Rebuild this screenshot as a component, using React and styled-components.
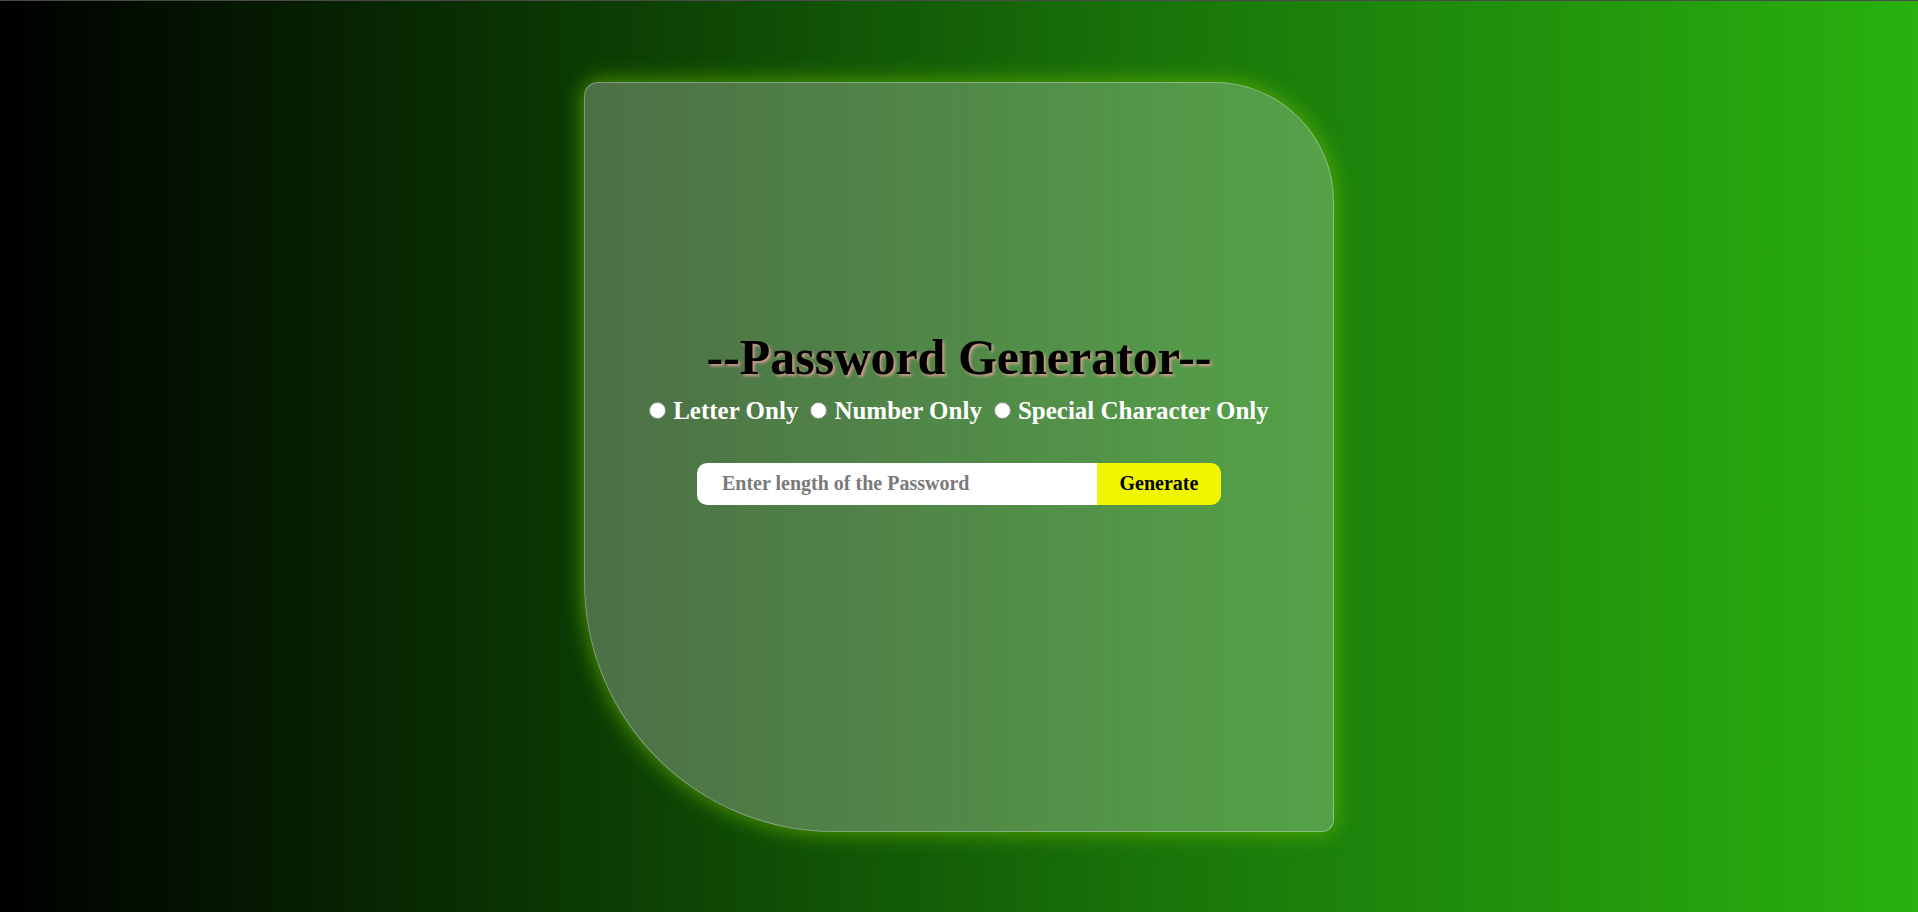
import React from 'react'
import styled, { createGlobalStyle } from 'styled-components'

const Global = createGlobalStyle`
  html, body {
    margin: 0;
    padding: 0;
    height: 100%;
  }
  body {
    font-family: 'Liberation Serif', 'Times New Roman', serif;
    border-top: 1px solid #4a4a4a;
    box-sizing: border-box;
  }
  #root {
    height: 100%;
  }
`

const Page = styled.div`
  height: 100%;
  display: flex;
  align-items: center;
  justify-content: center;
  background: linear-gradient(to right, #000000 0%, #0b3a03 30%, #19740a 60%, #29b10e 100%);
`

const Card = styled.div`
  width: 750px;
  height: 750px;
  box-sizing: border-box;
  display: flex;
  flex-direction: column;
  align-items: center;
  justify-content: center;
  padding-bottom: 80px;
  background: linear-gradient(to right, rgba(255, 255, 255, 0.27), rgba(255, 255, 255, 0.25));
  border: 1px solid rgba(255, 255, 255, 0.3);
  border-radius: 14px 120px 12px 250px;
  box-shadow: 0 0 22px rgba(110, 190, 0, 0.75);
`

const Title = styled.h1`
  margin: 0;
  font-size: 50px;
  line-height: 57px;
  font-weight: bold;
  color: #000;
  text-shadow: 2px 2px 3px rgba(240, 160, 160, 0.85);
`

const Options = styled.div`
  display: flex;
  align-items: center;
  gap: 12px;
  margin-top: 10px;
`

const Option = styled.label`
  display: flex;
  align-items: center;
  gap: 7px;
  color: #fff;
  font-size: 25px;
  line-height: 29px;
  font-weight: bold;
`

const Radio = styled.input`
  appearance: none;
  margin: 0;
  width: 17px;
  height: 17px;
  border-radius: 50%;
  background: #fff;
  border: 1px solid #8a8a8a;
`

const Form = styled.div`
  display: flex;
  margin-top: 38px;
  border-radius: 10px;
  overflow: hidden;
`

const LengthInput = styled.input`
  width: 400px;
  height: 42px;
  box-sizing: border-box;
  border: none;
  outline: none;
  padding: 0 0 0 25px;
  font-family: 'Liberation Serif', 'Times New Roman', serif;
  font-size: 20px;
  font-weight: bold;
  background: #fff;
  &::placeholder {
    color: #7a7a7a;
  }
`

const Button = styled.button`
  width: 124px;
  height: 42px;
  border: none;
  background: #f2f500;
  color: #000;
  font-family: 'Liberation Serif', 'Times New Roman', serif;
  font-size: 20px;
  font-weight: bold;
`

export default function App() {
  return (
    <>
      <Global />
      <Page>
        <Card>
          <Title>--Password Generator--</Title>
          <Options>
            <Option><Radio type="radio" name="kind" />Letter Only</Option>
            <Option><Radio type="radio" name="kind" />Number Only</Option>
            <Option><Radio type="radio" name="kind" />Special Character Only</Option>
          </Options>
          <Form>
            <LengthInput placeholder="Enter length of the Password" />
            <Button>Generate</Button>
          </Form>
        </Card>
      </Page>
    </>
  )
}
